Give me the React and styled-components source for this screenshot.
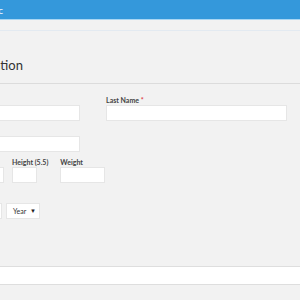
import styled, { createGlobalStyle } from 'styled-components';

const GlobalStyle = createGlobalStyle`
  html, body {
    margin: 0;
    padding: 0;
    background: #f2f2f2;
    overflow: hidden;
    font-family: 'Lato', 'Open Sans', sans-serif;
    color: #333;
  }
`;

const Header = styled.header`
  height: 19px;
  background: #3498db;
  border-bottom: 1px solid #a9d6f3;
  display: flex;
  align-items: center;
`;

const Clip = styled.div`
  width: ${(p) => p.$w}px;
  display: flex;
  justify-content: flex-end;
  white-space: nowrap;
`;

const HeaderTitle = styled.span`
  color: #fff;
  font-size: 10px;
  line-height: 12px;
`;

const SubBar = styled.div`
  height: 10px;
  border-bottom: 1px solid #e3eaf1;
`;

const Title = styled.h2`
  margin: 26px 0 0;
  font-size: 13px;
  line-height: 16px;
  font-weight: 400;
  color: #333;
`;

const Divider = styled.div`
  margin-top: 10px;
  height: 1px;
  background: #dcdcdc;
`;

const Form = styled.div`
  margin-left: -101px;
  padding-top: 12px;
  display: grid;
  grid-template-columns: 181px 181px;
  column-gap: 26px;
  row-gap: 6px;
  align-items: start;
`;

const Field = styled.div`
  display: flex;
  flex-direction: column;
  margin-top: ${(p) => p.$top || 0}px;
  margin-left: ${(p) => p.$left || 0}px;
`;

const Label = styled.label`
  font-size: 7px;
  line-height: 9px;
  font-weight: 700;
  color: #444;
  white-space: nowrap;
`;

const Req = styled.span`
  color: #e03b3b;
`;

const Input = styled.div`
  box-sizing: border-box;
  height: 16px;
  width: ${(p) => (p.$w ? `${p.$w}px` : '100%')};
  background: #fff;
  border: 1px solid #e6e6e6;
`;

const Inline = styled.div`
  display: flex;
  align-items: flex-end;
  gap: ${(p) => p.$gap || 0}px;
`;

const Select = styled.div`
  box-sizing: border-box;
  height: 16px;
  width: ${(p) => p.$w}px;
  background: #fff;
  border: 1px solid #e6e6e6;
  display: flex;
  align-items: center;
  justify-content: space-between;
  padding: 0 3px 0 6px;
  font-size: 7px;
  color: #333;
`;

const Arrow = styled.span`
  font-size: 6px;
  line-height: 6px;
  color: #222;
`;

const Wide = styled.div`
  box-sizing: border-box;
  margin: 47px 0 0 -101px;
  height: 19px;
  width: 520px;
  background: #fff;
  border: 1px solid #dedede;
`;

const CellRow = styled.div`
  padding: 5px 0 0 106px;
`;

export default function App() {
  return (
    <>
      <GlobalStyle />
      <Header>
        <Clip $w={3}>
          <HeaderTitle>Basic</HeaderTitle>
        </Clip>
      </Header>
      <SubBar />
      <Title>
        <Clip $w={23}>Personal Information</Clip>
      </Title>
      <Divider />
      <Form>
        <Field>
          <Label>
            First Name <Req>*</Req>
          </Label>
          <Input />
        </Field>
        <Field>
          <Label>
            Last Name <Req>*</Req>
          </Label>
          <Input />
        </Field>
        <Field>
          <Label>Email</Label>
          <Input />
        </Field>
        <div />
        <Inline>
          <Field>
            <Label>Blood Group</Label>
            <Select $w={105}>
              <span>Select</span>
              <Arrow>▼</Arrow>
            </Select>
          </Field>
          <Field $left={8}>
            <Label>Height (5.5)</Label>
            <Input $w={25} />
          </Field>
          <Field $left={12}>
            <Label>Weight</Label>
            <Input $w={45} />
          </Field>
        </Inline>
        <div />
        <Field $top={5}>
          <Label>Date of Birth</Label>
          <Inline $gap={4}>
            <Select $w={34}>
              <span>Day</span>
              <Arrow>▼</Arrow>
            </Select>
            <Select $w={65}>
              <span>Month</span>
              <Arrow>▼</Arrow>
            </Select>
            <Select $w={34}>
              <span>Year</span>
              <Arrow>▼</Arrow>
            </Select>
          </Inline>
        </Field>
      </Form>
      <Wide />
      <CellRow>
        <Label>
          Cell No. <Req>*</Req>
        </Label>
      </CellRow>
    </>
  );
}
